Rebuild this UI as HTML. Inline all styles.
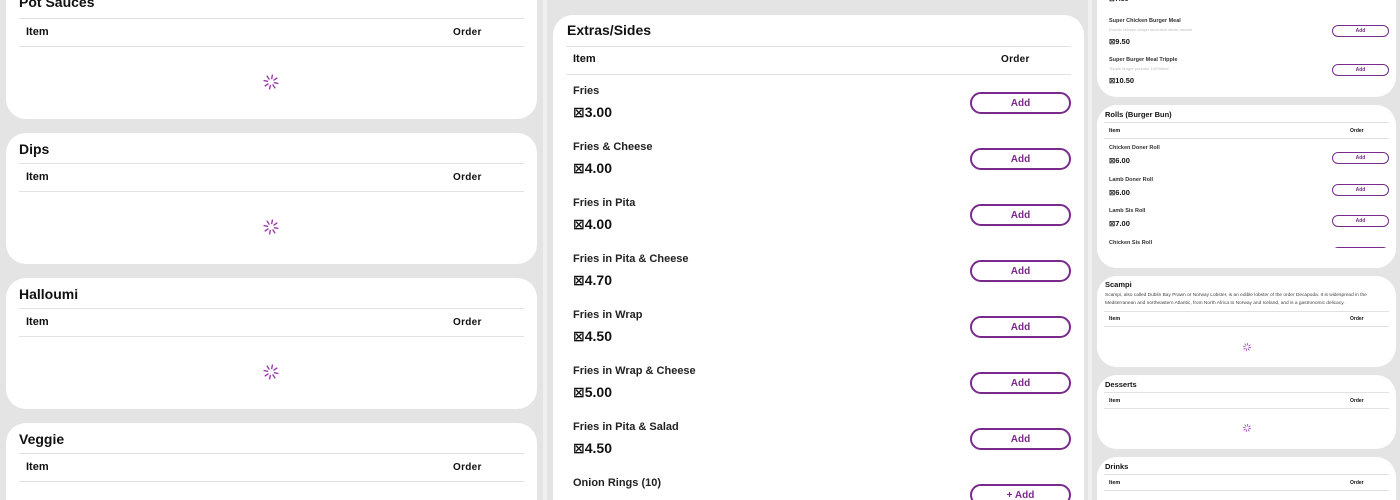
<!DOCTYPE html>
<html style="width:1400px;height:500px;overflow:hidden"><head><meta charset="utf-8"><style>
*{margin:0;padding:0;box-sizing:border-box}
body{width:1400px;height:500px;overflow:hidden;background:#e4e4e4;font-family:"Liberation Sans","DejaVu Sans",sans-serif;color:#111;position:relative}
.card{position:absolute;background:#fff;border-radius:20px;overflow:hidden}
.t{position:absolute;font-weight:bold;white-space:nowrap}
.hl{position:absolute;height:1px;background:#e2e2e2}
.btn{position:absolute;border:2px solid #7a2a8c;border-radius:12px;color:#7a2a8c;font-weight:bold;background:#fff;display:flex;align-items:center;justify-content:center}
.sp{position:absolute}
.strip{position:absolute;top:0;height:500px;background:#f0f0f0}
</style></head><body>
<div class="strip" style="left:543px;width:4px"></div>
<div class="strip" style="left:1088px;width:4px"></div>

<div class="card" style="left:6px;top:-30px;width:531px;height:149px"></div>
<div class="t" style="left:19px;top:-6px;font-size:14px">Pot Sauces</div>
<div class="hl" style="left:19px;top:18px;width:505px"></div>
<div class="t" style="left:26px;top:26px;font-size:11px">Item</div>
<div class="t" style="left:453px;top:27px;font-size:10px;letter-spacing:.3px">Order</div>
<div class="hl" style="left:19px;top:46px;width:505px"></div>

<div id="L"></div>

<div class="card" style="left:553px;top:-30px;width:531px;height:30px;border-radius:0 0 14px 14px"></div>
<div class="card" style="left:553px;top:15px;width:531px;height:485px;border-radius:20px 20px 0 0"></div>
<div class="t" style="left:567px;top:22px;font-size:14px">Extras/Sides</div>
<div class="hl" style="left:566px;top:46px;width:505px"></div>
<div class="t" style="left:573px;top:53px;font-size:11px">Item</div>
<div class="t" style="left:1001px;top:54px;font-size:10px;letter-spacing:.3px">Order</div>
<div class="hl" style="left:566px;top:74px;width:505px"></div>
<div id="M"></div>

<div class="card" style="left:1097px;top:-40px;width:299px;height:137px"></div>
<div class="t" style="left:1109px;top:-5px;font-size:7px">&#x22A0;7.50</div>
<div id="R"></div>

<script>
function spin(cx,cy,s){s=s||1;let l='';for(let i=0;i<8;i++){const a=i*Math.PI/4+0.2;const r1=3.5*s,r2=7*s;l+=`<line x1="${cx+r1*Math.cos(a)}" y1="${cy+r1*Math.sin(a)}" x2="${cx+r2*Math.cos(a)}" y2="${cy+r2*Math.sin(a)}"/>`;}
return `<svg class="sp" style="left:0;top:0" width="1400" height="500"><g stroke="#9a3aac" stroke-width="${1.4*s}" stroke-linecap="round">${l}</g></svg>`}
let h='';
h+=spin(271,82);
[['Dips',133],['Halloumi',278],['Veggie',423]].forEach(([n,t])=>{
h+=`<div class="card" style="left:6px;top:${t}px;width:531px;height:${t>400?77:131}px;${t>400?'border-radius:20px 20px 0 0':''}"></div>
<div class="t" style="left:19px;top:${t+8}px;font-size:14px">${n}</div>
<div class="hl" style="left:19px;top:${t+30}px;width:505px"></div>
<div class="t" style="left:26px;top:${t+38}px;font-size:11px">Item</div>
<div class="t" style="left:453px;top:${t+39}px;font-size:10px;letter-spacing:.3px">Order</div>
<div class="hl" style="left:19px;top:${t+58}px;width:505px"></div>`;
if(t<400)h+=spin(271,t+94);});
document.getElementById('L').outerHTML=h;
h='';
[['Fries','3.00'],['Fries &amp; Cheese','4.00'],['Fries in Pita','4.00'],['Fries in Pita &amp; Cheese','4.70'],['Fries in Wrap','4.50'],['Fries in Wrap &amp; Cheese','5.00'],['Fries in Pita &amp; Salad','4.50'],['Onion Rings (10)','']].forEach(([n,p],i)=>{
const y=85+i*56;
h+=`<div class="t" style="left:573px;top:${y}px;font-size:11px;color:#222">${n}</div>
<div class="t" style="left:573px;top:${y+19}px;font-size:14px">${p?'&#x22A0;'+p:''}</div>
<div class="btn" style="left:970px;top:${y+7}px;width:101px;height:22px;font-size:10px">${p?'Add':'+ Add'}</div>`;});
document.getElementById('M').outerHTML=h;
h='';
function rb(y,n,p,d){return `<div class="t" style="left:1109px;top:${y}px;font-size:5.5px;color:#333">${n}</div>`+(d?`<div class="t" style="left:1109px;top:${y+9}px;font-size:4px;color:#bbb;font-weight:normal">${d}</div>`:'')+
`<div class="t" style="left:1109px;top:${y+(d?19:11)}px;font-size:7.5px">&#x22A0;${p}</div>
<div class="btn" style="left:1332px;top:${y+7}px;width:57px;height:12px;font-size:5px;border-width:1px;border-radius:7px">Add</div>`}
h+=rb(18,'Super Chicken Burger Meal','9.50','Double chicken burger succulent whole muscle')+rb(57,'Super Burger Meal Tripple','10.50','Tripple burger pounder 100%beef');
h+=`<div class="card" style="left:1097px;top:105px;width:299px;height:163px"></div>
<div class="t" style="left:1105px;top:110px;font-size:7.5px">Rolls (Burger Bun)</div>
<div class="hl" style="left:1104px;top:122px;width:285px"></div>
<div class="t" style="left:1109px;top:128px;font-size:5.5px">Item</div>
<div class="t" style="left:1350px;top:128px;font-size:5px">Order</div>
<div class="hl" style="left:1104px;top:138px;width:285px"></div>`;
h+=rb(145,'Chicken Doner Roll','6.00')+rb(177,'Lamb Doner Roll','6.00')+rb(208,'Lamb Sis Roll','7.00')+rb(240,'Chicken Sis Roll','');
h+=`<div style="position:absolute;left:1097px;top:248px;width:299px;height:20px;background:#fff;border-radius:0 0 20px 20px"></div>`;
h+=`<div class="card" style="left:1097px;top:276px;width:299px;height:91px"></div>
<div class="t" style="left:1105px;top:280px;font-size:7.5px">Scampi</div>
<div style="position:absolute;left:1105px;top:292px;width:290px;font-size:4.8px;line-height:8px;color:#444">Scampi, also called Dublin Bay Prawn or Norway Lobster, is an edible lobster of the order Decapoda. It is widespread in the Mediterranean and northeastern Atlantic, from North Africa to Norway and Iceland, and is a gastronomic delicacy.</div>
<div class="hl" style="left:1104px;top:311px;width:285px"></div>
<div class="t" style="left:1109px;top:316px;font-size:5.5px">Item</div>
<div class="t" style="left:1350px;top:316px;font-size:5px">Order</div>
<div class="hl" style="left:1104px;top:326px;width:285px"></div>`+spin(1247,347,.55);
[['Desserts',375,74],['Drinks',457,43]].forEach(([n,t,hh])=>{
h+=`<div class="card" style="left:1097px;top:${t}px;width:299px;height:${hh}px;${t>450?'border-radius:20px 20px 0 0':''}"></div>
<div class="t" style="left:1105px;top:${t+5}px;font-size:7.5px">${n}</div>
<div class="hl" style="left:1104px;top:${t+17}px;width:285px"></div>
<div class="t" style="left:1109px;top:${t+23}px;font-size:5.5px">Item</div>
<div class="t" style="left:1350px;top:${t+23}px;font-size:5px">Order</div>
<div class="hl" style="left:1104px;top:${t+33}px;width:285px"></div>`;});
h+=spin(1247,428,.55);
document.getElementById('R').outerHTML=h;
</script>
</body></html>
